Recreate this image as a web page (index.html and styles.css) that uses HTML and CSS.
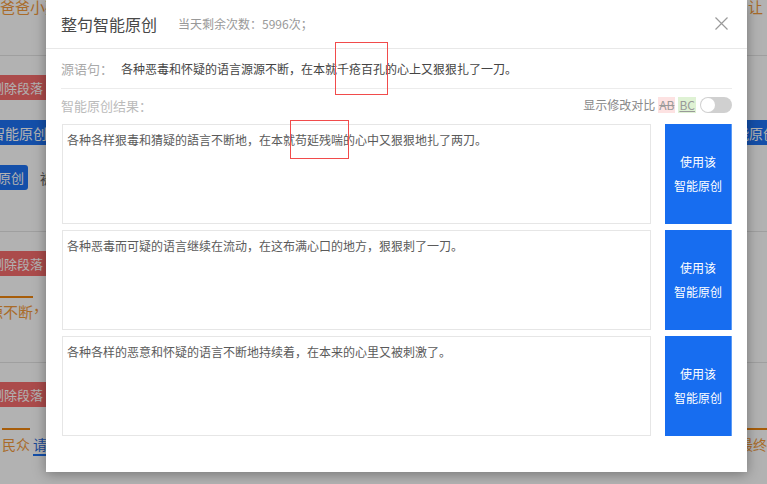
FILE: index.html
```html
<!DOCTYPE html>
<html lang="zh-CN">
<head>
<meta charset="utf-8">
<title>整句智能原创</title>
<link rel="stylesheet" href="styles.css">
</head>
<body>
<div class="page">
  <section class="sec sec-1">
    <div class="line-row">
      <span class="orange">爸爸小孩</span>
      <span class="orange">，让</span>
    </div>
  </section>
  <section class="sec sec-2">
    <div class="btn-row"><span class="btn red">删除段落</span></div>
    <div class="btn-row spread"><span class="btn blue wide">使用该智能原创</span><span class="btn blue wide right">智能原创</span></div>
    <div class="btn-row"><span class="btn blue small">原创</span><span class="muted-word">被</span></div>
  </section>
  <section class="sec sec-3">
    <div class="btn-row"><span class="btn red">删除段落</span></div>
    <div class="text-row"><span class="orange topline">源不断</span><span class="orange">，</span></div>
  </section>
  <section class="sec sec-4">
    <div class="btn-row"><span class="btn red">删除段落</span></div>
    <div class="text-row spread">
      <span><span class="orange topline short">民众</span><span class="bluelink">请</span></span>
      <span class="orange topline">最终</span>
    </div>
  </section>
</div>
<div class="mask"></div>
<div class="modal">
  <header class="modal-head">
    <h1 class="modal-title">整句智能原创</h1>
    <span class="modal-count">当天剩余次数：5996次；</span>
    <span class="modal-close">
      <svg width="13" height="13" viewBox="0 0 13 13"><path d="M0.5 0.5 L12.5 12.5 M12.5 0.5 L0.5 12.5" stroke="#9a9a9a" stroke-width="1.2" fill="none"/></svg>
    </span>
  </header>
  <div class="modal-body">
    <div class="source-row">
      <span class="label">源语句：</span>
      <span class="source-text">各种恶毒和怀疑的语言源源不断，在本就<span class="mark mark-src">千疮百孔</span>的心上又狠狠扎了一刀。</span>
    </div>
    <div class="result-head">
      <span class="label">智能原创结果：</span>
      <div class="compare">
        <span>显示修改对比</span>
        <span class="tag del">AB</span>
        <span class="tag add">BC</span>
        <span class="switch"><span class="knob"></span></span>
      </div>
    </div>
    <div class="cards">
      <div class="card">
        <div class="card-text">各种各样狠毒和猜疑的語言不断地，在本就<span class="mark mark-card">苟延残喘</span>的心中又狠狠地扎了两刀。</div>
        <button class="use-btn">使用该<br>智能原创</button>
      </div>
      <div class="card">
        <div class="card-text">各种恶毒而可疑的语言继续在流动，在这布满心口的地方，狠狠刺了一刀。</div>
        <button class="use-btn">使用该<br>智能原创</button>
      </div>
      <div class="card">
        <div class="card-text">各种各样的恶意和怀疑的语言不断地持续着，在本来的心里又被刺激了。</div>
        <button class="use-btn">使用该<br>智能原创</button>
      </div>
    </div>
  </div>
</div>
</body>
</html>
```
FILE: styles.css
```css
* { box-sizing: border-box; }
html, body { margin: 0; padding: 0; }
body {
  width: 767px;
  height: 484px;
  overflow: hidden;
  background: #fff;
  font-family: "Noto Sans CJK SC", "Noto Sans", sans-serif;
  position: relative;
}

/* ---------- background page ---------- */
.page { width: 767px; font-size: 14px; }
.sec { border-bottom: 1px solid #e4e4e4; }
.sec-1 { height: 59px; }
.sec-2 { height: 176px; padding-top: 19px; display: flex; flex-direction: column; gap: 20px; }
.sec-3 { height: 131px; padding-top: 19px; }
.sec-4 { height: 119px; padding-top: 19px; border-bottom: none; }

.line-row { display: flex; justify-content: space-between; margin-top: -3px; font-size: 15px; line-height: 20px; padding-right: 4px; }
.orange { color: #f39a3c; }
.btn-row { display: flex; align-items: center; height: 25px; margin-left: -12px; }
.btn-row.spread { justify-content: space-between; margin-right: -40px; }
.btn { display: inline-flex; align-items: center; height: 25px; padding: 0 12px; color: #fff; font-size: 13px; white-space: nowrap; }
.btn.red { background: #f56c6c; width: 90px; margin-left: -9px; }
.btn.blue { background: #1d72f2; }
.btn.wide { padding: 0 14px 0 0; margin-left: -39px; font-size: 14px; }
.btn.wide.right { margin-left: 0; padding: 0 30px 0 6px; }
.btn.small { border-radius: 3px; margin-left: -4px; padding: 0 4px 0 14px; height: 25px; }
.muted-word { color: #666; margin-left: 12px; font-size: 14px; }
.text-row { display: flex; align-items: flex-start; margin-top: 20px; font-size: 15px; line-height: 20px; }
.text-row.spread { justify-content: space-between; margin-top: 21px; padding-right: 0; margin-left: 2px; font-size: 14px; }
.topline { border-top: 2px solid #f0860f; padding-top: 4px; }
.sec-3 .text-row { margin-left: -12px; }
.short { display: inline-block; }
.bluelink { display: inline-block; color: #2a6ad8; border-bottom: 2px solid #1d72f2; margin-left: 3px; padding-top: 6px; }

.mask { position: absolute; inset: 0; background: rgba(0, 0, 0, 0.3); }

/* ---------- modal ---------- */
.modal {
  position: absolute;
  left: 46px;
  top: 0;
  width: 701px;
  height: 472px;
  background: #fff;
  box-shadow: 0 2px 12px rgba(0, 0, 0, 0.35);
}
.modal-head {
  height: 49px;
  display: flex;
  align-items: center;
  padding: 0 19px 1px 15px;
  border-bottom: 1px solid #e8e8e8;
}
.modal-title { margin: 0; font-size: 16px; font-weight: normal; color: #484848; line-height: 20px; }
.modal-count { margin-left: 21px; font-size: 12px; color: #999; line-height: 16px; }
.modal-close { margin-left: auto; display: flex; }

.modal-body { padding: 0 15px; }
.source-row {
  height: 40px;
  display: flex;
  align-items: center;
  border-bottom: 1px solid #ececec;
  font-size: 12px;
  line-height: 16px;
  white-space: nowrap;
}
.label { color: #aaa; font-size: 13px; white-space: nowrap; flex-shrink: 0; }
.source-row .label { margin-right: 8px; }
.source-text { color: #444; }
.mark { position: relative; }
.mark::after {
  content: "";
  position: absolute;
  border: 1px solid #f14b4b;
}
.mark-src::after { left: -2px; right: -3px; top: -18px; bottom: -18px; }
.mark-card::after { left: -5px; right: -6px; top: -11px; bottom: -11px; }

.result-head {
  height: 35px;
  display: flex;
  align-items: center;
  justify-content: space-between;
  padding-bottom: 3px;
}
.result-head .label { color: #bbb; }
.compare { display: flex; align-items: center; font-size: 12px; color: #888; line-height: 16px; }
.tag { margin-left: 3px; padding: 0 1px; color: #999; }
.tag.del { background: #fde2e2; text-decoration: line-through; }
.tag.add { background: #dff2d4; text-decoration: underline; }
.switch {
  margin-left: 4px;
  width: 32px;
  height: 16px;
  border-radius: 8px;
  background: #d0d0d0;
  display: flex;
  align-items: center;
  padding: 0 1px;
}
.knob { width: 14px; height: 14px; border-radius: 50%; background: #fff; }

.cards { display: flex; flex-direction: column; gap: 6px; }
.card { display: flex; gap: 14px; height: 100px; }
.card-text {
  flex: 1;
  margin-left: 1px;
  border: 1px solid #e6e6e6;
  padding: 6px 4px;
  font-size: 12px;
  line-height: 18px;
  color: #5a5a5a;
}
.use-btn {
  width: 67px;
  border: none;
  border-right: 1px solid #5b9bf6;
  background: #176df0;
  color: #fff;
  font-family: inherit;
  font-size: 12px;
  line-height: 24px;
  padding: 0;
  cursor: pointer;
}
```
